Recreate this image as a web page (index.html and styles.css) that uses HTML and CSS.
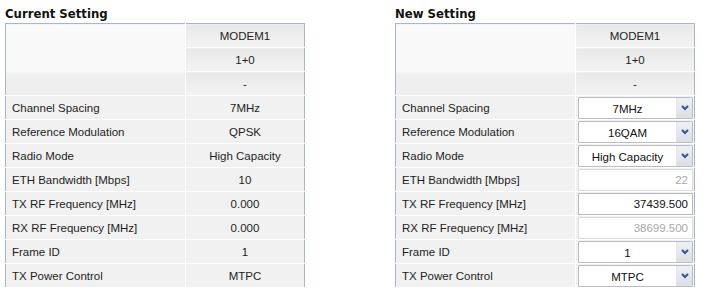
FILE: index.html
```html
<!DOCTYPE html>
<html>
<head>
    <title>Modem Settings</title>
    <link rel="stylesheet" href="styles.css">
</head>
<body>
    <div class="container">
        <div class="panel">
            <div class="title">Current Setting</div>
            <table class="settings">
                <tr class="head">
                    <td class="label blank" rowspan="3"></td>
                    <td class="value">MODEM1</td>
                </tr>
                <tr class="head"><td class="value">1+0</td></tr>
                <tr class="head last"><td class="value">-</td></tr>
                <tr><td class="label">Channel Spacing</td><td class="value">7MHz</td></tr>
                <tr><td class="label">Reference Modulation</td><td class="value">QPSK</td></tr>
                <tr><td class="label">Radio Mode</td><td class="value">High Capacity</td></tr>
                <tr><td class="label">ETH Bandwidth [Mbps]</td><td class="value">10</td></tr>
                <tr><td class="label">TX RF Frequency [MHz]</td><td class="value">0.000</td></tr>
                <tr><td class="label">RX RF Frequency [MHz]</td><td class="value">0.000</td></tr>
                <tr><td class="label">Frame ID</td><td class="value">1</td></tr>
                <tr><td class="label">TX Power Control</td><td class="value">MTPC</td></tr>
            </table>
        </div>

        <div class="panel">
            <div class="title">New Setting</div>
            <table class="settings">
                <tr class="head">
                    <td class="label blank" rowspan="3"></td>
                    <td class="value">MODEM1</td>
                </tr>
                <tr class="head"><td class="value">1+0</td></tr>
                <tr class="head last"><td class="value">-</td></tr>
                <tr>
                    <td class="label">Channel Spacing</td>
                    <td class="value"><div class="select"><span>7MHz</span><i class="arrow"><svg width="8" height="6" viewBox="0 0 8 6"><polyline points="1,1 4,4 7,1" fill="none" stroke="#34558a" stroke-width="2"/></svg></i></div></td>
                </tr>
                <tr>
                    <td class="label">Reference Modulation</td>
                    <td class="value"><div class="select"><span>16QAM</span><i class="arrow"><svg width="8" height="6" viewBox="0 0 8 6"><polyline points="1,1 4,4 7,1" fill="none" stroke="#34558a" stroke-width="2"/></svg></i></div></td>
                </tr>
                <tr>
                    <td class="label">Radio Mode</td>
                    <td class="value"><div class="select"><span>High Capacity</span><i class="arrow"><svg width="8" height="6" viewBox="0 0 8 6"><polyline points="1,1 4,4 7,1" fill="none" stroke="#34558a" stroke-width="2"/></svg></i></div></td>
                </tr>
                <tr>
                    <td class="label">ETH Bandwidth [Mbps]</td>
                    <td class="value"><div class="input disabled">22</div></td>
                </tr>
                <tr>
                    <td class="label">TX RF Frequency [MHz]</td>
                    <td class="value"><div class="input">37439.500</div></td>
                </tr>
                <tr>
                    <td class="label">RX RF Frequency [MHz]</td>
                    <td class="value"><div class="input disabled">38699.500</div></td>
                </tr>
                <tr>
                    <td class="label">Frame ID</td>
                    <td class="value"><div class="select"><span>1</span><i class="arrow"><svg width="8" height="6" viewBox="0 0 8 6"><polyline points="1,1 4,4 7,1" fill="none" stroke="#34558a" stroke-width="2"/></svg></i></div></td>
                </tr>
                <tr>
                    <td class="label">TX Power Control</td>
                    <td class="value"><div class="select"><span>MTPC</span><i class="arrow"><svg width="8" height="6" viewBox="0 0 8 6"><polyline points="1,1 4,4 7,1" fill="none" stroke="#34558a" stroke-width="2"/></svg></i></div></td>
                </tr>
            </table>
        </div>
    </div>
</body>
</html>
```

FILE: styles.css
```css
body {
    margin: 0;
    background-color: #fff;
    font-family: "Liberation Sans", Arial, sans-serif;
    font-size: 11.5px;
    color: #1e1e1e;
}
.container {
    display: flex;
    gap: 90px;
    padding: 5px 0 0 5px;
}
.panel {
    width: 300px;
}
.title {
    font-family: "DejaVu Sans Condensed", "DejaVu Sans", sans-serif;
    font-stretch: condensed;
    font-weight: bold;
    font-size: 13px;
    height: 18px;
    line-height: 18px;
    color: #111;
}
.settings {
    width: 300px;
    border-collapse: collapse;
    border: 1px solid #a9b6c9;
    table-layout: fixed;
}
.settings td {
    height: 23px;
    padding: 0;
    border-bottom: 1px solid #fff;
    background-color: #f1f1f1;
}
.settings .label {
    width: 180px;
    padding-left: 6px;
    box-sizing: border-box;
    border-right: 1px solid #fff;
}
.settings .blank {
    background: linear-gradient(#f9f9f9 0%, #f9f9f9 66%, #efefef 70%, #efefef 100%);
}
.settings .value {
    text-align: center;
}
.head .value {
    background: linear-gradient(#e9e9e9, #f3f3f3);
}
.select {
    display: flex;
    align-items: stretch;
    height: 20px;
    margin: 0 1px 0 2px;
    border: 1px solid #b9bcc1;
    border-radius: 2px;
    background-color: #fff;
}
.select span {
    flex: 1;
    line-height: 22px;
    color: #111;
}
.arrow {
    width: 15px;
    display: flex;
    align-items: center;
    justify-content: center;
    background: linear-gradient(#eef0f4, #dadee6);
    border-left: 1px solid #e6e8ec;
}
.input {
    height: 20px;
    line-height: 21px;
    margin: 0 1px 0 2px;
    padding-right: 4px;
    border: 1px solid #b7bcc3;
    background-color: #fff;
    text-align: right;
    color: #111;
}
.input.disabled {
    border-color: #dcdcdc;
    color: #a8a8a8;
}
```
